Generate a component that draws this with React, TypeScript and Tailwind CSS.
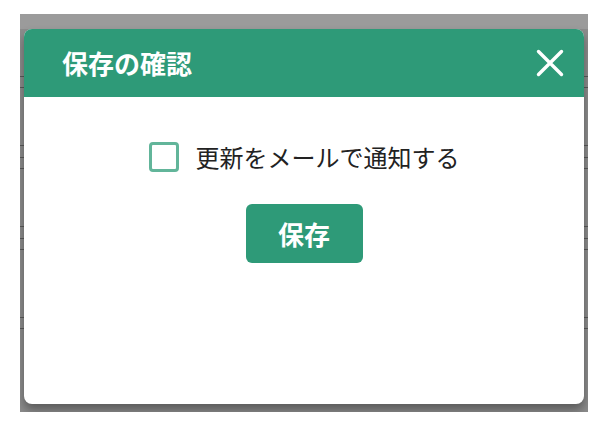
const rowGaps = [63, 11, 58, 12, 11, 58, 12, 11, 68, 11];

export default function App() {
  return (
    <div
      className="w-[608px] h-[426px] bg-white pt-[14px] pl-[20px]"
      style={{ fontFamily: '"Noto Sans CJK JP", "Noto Sans", sans-serif' }}
    >
      {/* dimmed page behind the dialog */}
      <div className="relative w-[568px] h-[398px] bg-[#8c8c8c] overflow-hidden">
        <div className="absolute inset-x-0 top-0 h-[15px] bg-[#9b9b9b]" />
        <div className="flex flex-col">
          {rowGaps.map((g, i) => (
            <div key={i} className="border-b border-[#5a5a5a]" style={{ marginTop: g - 1 }} />
          ))}
        </div>

        {/* dialog */}
        <div className="absolute left-[4px] top-[15px] w-[560px] h-[375px] bg-white rounded-[8px] overflow-hidden shadow-[0_6px_10px_rgba(0,0,0,0.35)] flex flex-col">
          <div className="h-[68px] bg-[#2e9a78] flex items-center justify-between pl-[38px] pr-[20px]">
            <h2 className="text-white font-bold text-[26px] leading-none">保存の確認</h2>
            <button className="w-[28px] h-[28px] flex items-center justify-center">
              <svg width="28" height="28" viewBox="0 0 28 28" fill="none" stroke="white" strokeWidth="3.4" strokeLinecap="round">
                <path d="M2.5 2.5 L25.5 25.5 M25.5 2.5 L2.5 25.5" />
              </svg>
            </button>
          </div>

          <div className="flex flex-col items-center pt-[45px]">
            <label className="flex items-center gap-[17px]">
              <span className="w-[30px] h-[30px] rounded-[4px] border-[3px] border-[#62b59a] bg-white" />
              <span className="text-[24px] leading-none text-[#222222]">更新をメールで通知する</span>
            </label>
            <button className="mt-[32px] w-[117px] h-[59px] rounded-[6px] bg-[#2e9a78] text-white font-bold text-[26px] leading-none">
              保存
            </button>
          </div>
        </div>
      </div>
    </div>
  );
}
